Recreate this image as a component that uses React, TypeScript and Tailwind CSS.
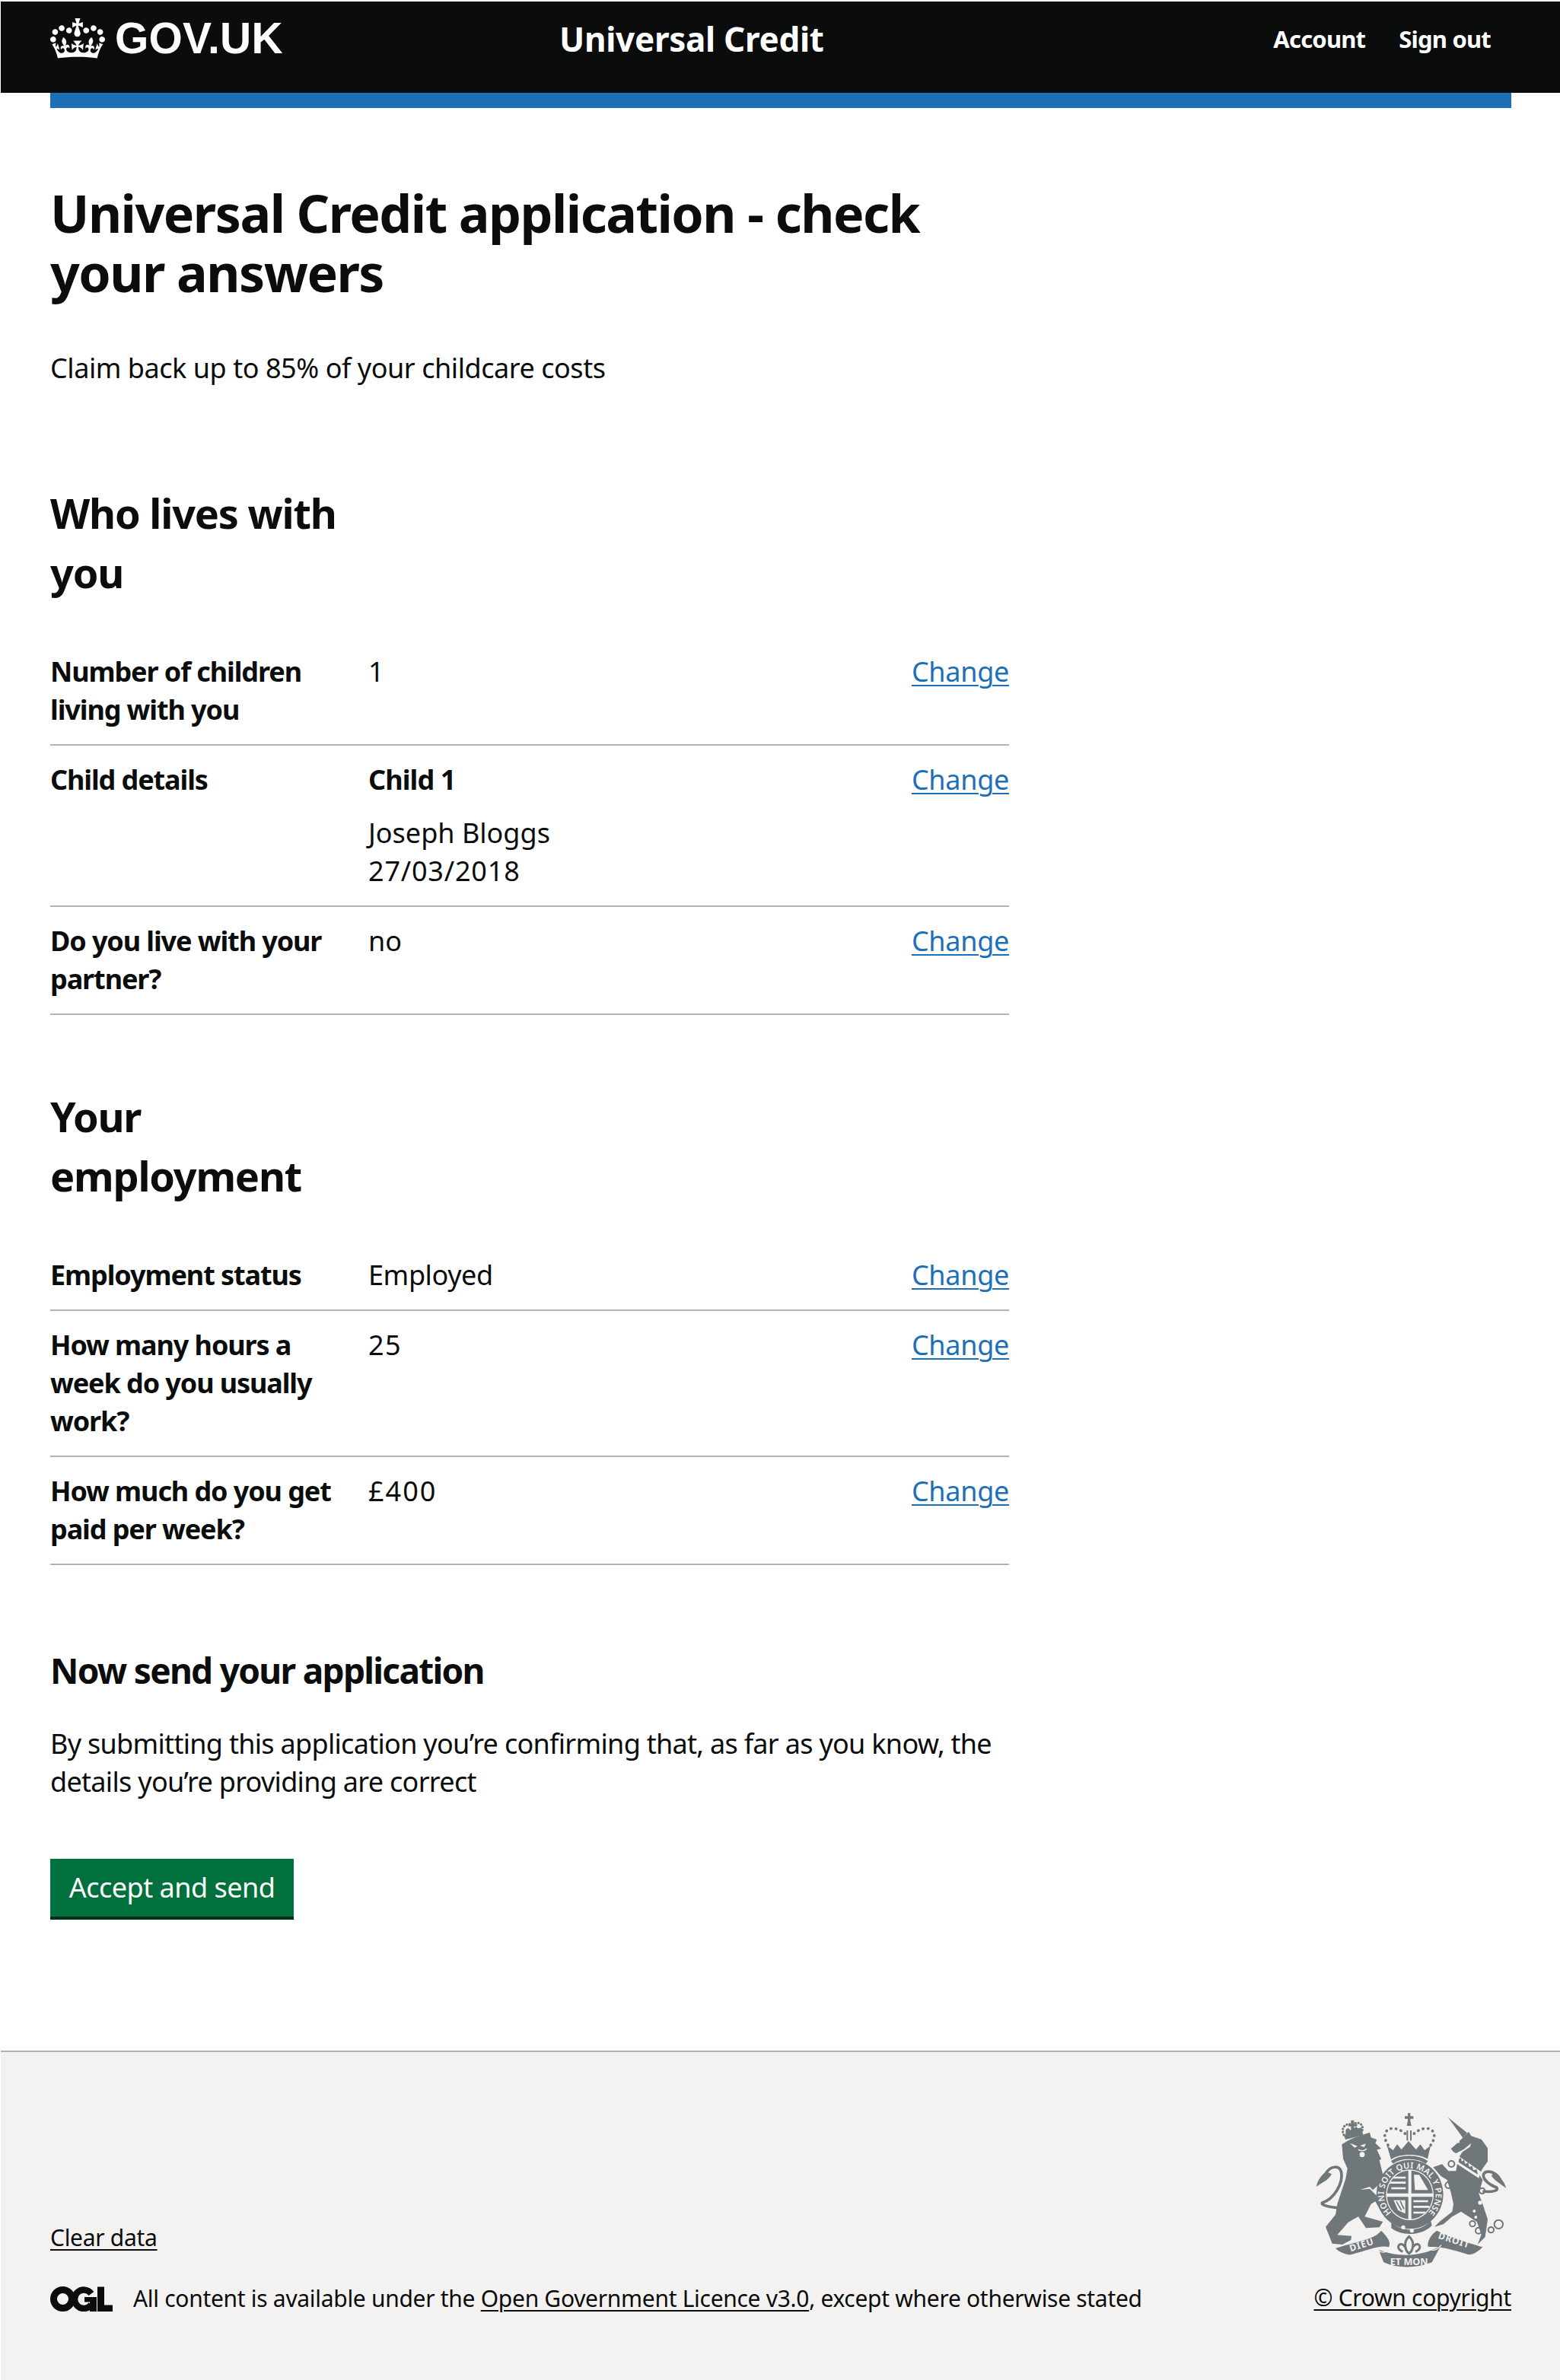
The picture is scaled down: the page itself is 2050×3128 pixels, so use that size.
import React from "react";

const INK = "#0b0c0c";

function Crown() {
  return (
    <svg viewBox="0 0 132 97" className="w-[72px] h-[53px] shrink-0 fill-white" aria-hidden="true">
      <path d="M25 30.2c3.5 1.5 7.7-.2 9.1-3.7 1.5-3.6-.2-7.8-3.9-9.2-3.6-1.4-7.6.3-9.1 3.9-1.4 3.5.3 7.5 3.9 9zM9 39.5c3.6 1.5 7.8-.2 9.2-3.7 1.5-3.6-.2-7.8-3.9-9.1-3.6-1.5-7.6.2-9.1 3.8-1.4 3.5.3 7.5 3.8 9zM4.4 57.2c3.5 1.5 7.7-.2 9.1-3.8 1.5-3.6-.2-7.7-3.9-9.1-3.5-1.5-7.6.3-9.1 3.8-1.4 3.5.3 7.6 3.9 9.1zm38.3-21.4c3.5 1.5 7.7-.2 9.1-3.8 1.5-3.6-.2-7.7-3.9-9.1-3.6-1.5-7.6.3-9.1 3.8-1.3 3.6.4 7.7 3.9 9.1zm64.4-5.6c-3.6 1.5-7.8-.2-9.1-3.7-1.5-3.6.2-7.8 3.8-9.2 3.6-1.4 7.7.3 9.2 3.9 1.3 3.5-.4 7.5-3.9 9zm15.9 9.3c-3.6 1.5-7.7-.2-9.1-3.7-1.5-3.6.2-7.8 3.7-9.1 3.6-1.5 7.7.2 9.2 3.8 1.5 3.5-.3 7.5-3.8 9zm4.7 17.7c-3.6 1.5-7.8-.2-9.2-3.8-1.5-3.6.2-7.7 3.9-9.1 3.6-1.5 7.7.3 9.2 3.8 1.3 3.5-.4 7.6-3.9 9.1zM89.3 35.8c-3.6 1.5-7.8-.2-9.2-3.8-1.4-3.6.2-7.7 3.9-9.1 3.6-1.5 7.7.3 9.2 3.8 1.4 3.6-.3 7.7-3.9 9.1zM69.7 17.7l8.9 4.7V9.3l-8.9 2.8c-.2-.3-.5-.6-.9-.9L72.4 0H59.6l3.5 11.2c-.3.3-.6.5-.9.9l-8.8-2.8v13.1l8.8-4.7c.3.3.6.7.9.9l-5 15.4v.1c-.2.8-.4 1.6-.4 2.4 0 4.1 3.1 7.5 7 8.1h1.2c4-.6 7-4 7-8.1 0-.8-.1-1.7-.4-2.4V34l-5.1-15.4c.4-.2.7-.6 1-.9zM66 92.8c16.9 0 32.8 1.1 47.1 3.2 4-16.9 8.9-26.7 14-33.5l-9.6-3.4c1 4.9 1.1 7.2 0 10.2-1.5-1.4-3-4.3-4.2-8.7L108.6 76c2.8-2 5-3.2 7.5-3.3-4.4 9.4-10 11.9-13.6 11.2-4.3-.8-6.3-4.6-5.6-7.9 1-4.7 5.7-5.9 8-.5 4.3-8.7-3-11.4-7.6-8.8 7.1-7.2 7.9-13.5 2.1-21.1-8 6.1-8.1 12.3-4.5 20.8-4.7-5.4-12.1-2.5-9.5 6.2 3.4-5.2 7.9-2 7.2 3.1-.6 4.3-6.4 7.8-13.5 7.2-10.3-.9-10.9-8-11.2-13.8 2.5-.5 7.1 1.8 11 7.3L80.2 60c-4.1 4.4-8 5.3-12.3 5.4 1.4-4.4 8-11.6 8-11.6H55.5s6.4 7.2 7.9 11.6c-4.2-.1-8-1-12.3-5.4l1.4 16.4c3.9-5.5 8.5-7.7 10.9-7.3-.3 5.8-.9 12.8-11.1 13.8-7.2.6-12.9-2.9-13.5-7.2-.7-5 3.8-8.3 7.1-3.1 2.7-8.7-4.6-11.6-9.4-6.2 3.7-8.5 3.6-14.7-4.6-20.8-5.8 7.6-5 13.9 2.2 21.1-4.7-2.6-11.9.1-7.7 8.8 2.3-5.5 7.1-4.2 8.1.5.7 3.3-1.3 7.1-5.7 7.9-3.5.7-9-1.8-13.5-11.2 2.5.1 4.7 1.3 7.5 3.3l-4.7-15.4c-1.2 4.4-2.7 7.2-4.3 8.7-1.1-3-.9-5.3 0-10.2l-9.5 3.4c5 6.9 9.9 16.7 14 33.5 14.8-2.1 30.8-3.2 47.7-3.2z" />
    </svg>
  );
}

function Ogl() {
  return (
    <svg viewBox="0 0 82 33" className="w-[82px] h-[33px] shrink-0" aria-hidden="true">
      <circle cx="16.5" cy="16.5" r="12" fill="none" stroke={INK} strokeWidth="9" />
      <path d="M54 9.5 A12.2 12.2 0 1 0 54 24" fill="none" stroke={INK} strokeWidth="8.5" />
      <path d="M62 0.5 H71 V24.5 H82 V33 H62 Z" fill={INK} />
      <path d="M45 14 H61 V33 H52 V20.5 H45 Z" fill={INK} />
    </svg>
  );
}

function Crest() {
  const c = "#6f777b";
  const bg = "#f3f2f1";
  const font = "'Noto Sans', sans-serif";
  return (
    <svg viewBox="0 0 858 720" className="w-[286px] h-[240px]" aria-hidden="true">
      {/* lion */}
      <path fill={c} d="M190 205 L215 190 L240 178 L300 158 L305 178 L328 186 L322 200 L345 222 L328 226 L345 262 L338 268 L352 325 L340 360 L312 385 L300 372 L262 384 L300 380 L330 410 L345 420 L360 440 L345 470 L322 430 L305 440 L280 490 L352 510 L338 532 L285 535 L255 490 L215 512 L172 562 L228 566 L226 582 L192 600 L152 596 L126 530 L165 482 L172 440 L205 340 L212 300 L195 262 Z" />
      <path fill="none" stroke={c} strokeWidth="11" d="M172 455 C120 450 110 440 112 436 C160 420 195 360 188 315 C180 285 145 290 128 318" />
      <path fill={c} d="M128 312 C110 325 92 350 90 372 C110 355 135 350 150 322 Z" />
      <path fill={bg} d="M222 200 L252 212 L240 218 Z M262 210 L285 202 L278 216 Z" />
      <circle cx="270" cy="245" r="10" fill={bg} />
      <path fill="none" stroke={bg} strokeWidth="4" d="M255 225 C262 232 280 232 288 222" />
      {/* lion crown */}
      <path fill="none" stroke={c} strokeWidth="9" strokeLinecap="round" strokeDasharray="1 11" d="M198 168 C182 135 212 118 232 128 C255 108 282 130 268 155" />
      <path fill={c} d="M198 168 L270 150 L274 168 L204 186 Z M226 110 H238 V124 H250 V134 H238 V155 H226 V134 H216 V124 H226 Z" />
      <path fill={c} d="M205 148 L215 140 L225 150 L245 136 L255 142 L268 138 L270 152 L205 170 Z" />
      {/* royal crown */}
      <path fill={c} d="M450 82 H460 V94 H472 V104 H460 V112 L464 132 H446 L450 112 V104 H438 V94 H450 Z" />
      <path fill="none" stroke={c} strokeWidth="11" strokeLinecap="round" strokeDasharray="1 19" d="M372 208 C345 165 365 140 395 142 C420 145 440 160 445 170" />
      <path fill="none" stroke={c} strokeWidth="11" strokeLinecap="round" strokeDasharray="1 19" d="M540 208 C570 165 548 140 518 142 C495 145 475 160 468 170" />
      <rect x="445" y="150" width="6" height="40" fill={c} />
      <rect x="459" y="150" width="6" height="40" fill={c} />
      <path fill={c} d="M368 210 L392 228 L408 205 L425 225 L453 192 L482 225 L500 205 L516 228 L540 210 L528 262 C490 240 415 240 384 265 Z" />
      <path fill="none" stroke={c} strokeWidth="14" d="M388 276 C420 250 490 250 525 276" />
      {/* unicorn */}
      <path fill={c} d="M608 98 L684 160 L668 180 Z" />
      <path fill={c} d="M620 222 L640 205 L660 185 L690 155 L700 172 L740 185 L765 220 L765 272 L745 300 L732 325 L745 345 L730 400 L745 440 L765 500 L755 570 L725 600 L740 560 L722 510 L690 490 L660 470 L625 490 L590 520 L555 530 L575 510 L625 470 L630 440 L620 395 L605 345 L580 330 L550 295 L585 283 L610 310 L640 310 L648 262 L665 235 L695 215 L700 200 L670 225 L640 240 L630 235 Z" />
      <path fill="none" stroke={c} strokeWidth="11" d="M745 390 C790 395 810 385 800 375 C760 360 735 330 755 315 C780 305 805 325 815 345" />
      <path fill={c} d="M788 312 C805 330 830 345 838 378 C815 360 795 350 780 330 Z" />
      <path fill={bg} d="M648 250 L738 312 L730 338 L640 280 Z" />
      <path fill={c} d="M652 262 L660 258 L662 272 L672 266 L676 282 L688 276 L692 294 L704 290 L708 306 L722 304 L726 324 L650 275 Z" />
      <circle cx="650" cy="196" r="4" fill={bg} />
      <g fill="none" stroke={c} strokeWidth="6">
        <circle cx="622" cy="282" r="12" /><circle cx="610" cy="366" r="12" /><circle cx="743" cy="388" r="11" />
        <circle cx="705" cy="518" r="11" /><circle cx="729" cy="545" r="12" /><circle cx="778" cy="542" r="11" /><circle cx="808" cy="520" r="17" />
      </g>
      <g fill={bg}><circle cx="735" cy="435" r="8" /><circle cx="712" cy="468" r="6" /><circle cx="718" cy="492" r="6" /></g>
      {/* garter and shield */}
      <ellipse cx="458" cy="402" rx="132" ry="136" fill={c} />
      <ellipse cx="458" cy="404" rx="94" ry="100" fill={bg} />
      <defs>
        <clipPath id="shield"><ellipse cx="458" cy="404" rx="90" ry="96" /></clipPath>
        <path id="garter" d="M386 474 A102 102 0 1 1 530 474" />
      </defs>
      <g clipPath="url(#shield)">
        <path fill={c} d="M360 300 H452 V398 H360 Z M464 300 H560 V398 H464 Z M464 412 H560 V510 H464 Z M360 412 H452 V510 H360 Z" />
        <path fill={bg} d="M385 332 H442 V340 H385 Z M375 352 H442 V360 H375 Z M385 374 H442 V382 H385 Z M474 325 L495 325 L530 385 L478 385 Z M472 425 H530 V433 H472 Z M472 447 H535 V455 H472 Z M472 470 H520 V478 H472 Z M394 425 L440 425 L440 478 L412 465 Z" />
        <path fill="none" stroke={c} strokeWidth="5" d="M405 430 L425 465 M420 428 L435 460" />
      </g>
      <text fontFamily={font} fontWeight="600" fontSize="33" fill={bg}>
        <textPath href="#garter" textLength="480" lengthAdjust="spacing">HONI SOIT QUI MAL Y PENSE</textPath>
      </text>
      {/* buckle */}
      <path fill={c} d="M385 510 C420 550 500 555 540 505 L545 525 C500 570 420 565 385 535 Z" />
      <circle cx="432" cy="532" r="8" fill={bg} /><circle cx="466" cy="545" r="8" fill={bg} />
      {/* fleur de lys */}
      <path fill="none" stroke={c} strokeWidth="9" d="M455 568 C430 590 440 625 455 635 C470 625 480 590 455 568 Z M440 610 C420 580 395 615 430 628 M470 610 C490 580 515 615 480 628" />
      {/* ribbon */}
      <path fill={c} d="M165 615 C240 590 320 580 345 545 C370 570 385 590 375 610 C340 600 285 625 225 640 C205 640 180 630 165 615 Z" />
      <path fill={c} d="M745 610 C680 590 600 565 565 545 C540 560 525 590 530 610 C580 605 640 625 690 640 C710 640 730 625 745 610 Z" />
      <path fill={c} d="M335 620 C410 650 500 650 580 605 L545 670 C480 695 410 695 355 670 Z" />
      <path fill="none" stroke={bg} strokeWidth="4" d="M330 618 C350 640 370 630 378 610 M582 602 C560 630 540 625 530 608" />
      <text fontFamily={font} fontWeight="700" fontSize="36" fill={bg} transform="translate(225 628) rotate(-18)" letterSpacing="3">DIEU</text>
      <text fontFamily={font} fontWeight="700" fontSize="36" fill={bg} transform="translate(568 575) rotate(18)" letterSpacing="3">DROIT</text>
      <text x="455" y="682" textAnchor="middle" fontFamily={font} fontWeight="700" fontSize="38" fill={bg}>ET MON</text>
    </svg>
  );
}

function Row({ k, children }: { k: React.ReactNode; children: React.ReactNode }) {
  return (
    <div className="grid grid-cols-[420px_1fr_auto] border-b-2 border-[#b1b4b6] pt-5 pb-5">
      <div className="font-bold tracking-[-1.1px] pr-8">{k}</div>
      <div className="ml-[-2px]">{children}</div>
      <div>
        <a href="#" className="text-[#1d70b8] underline underline-offset-[4px] decoration-2 tracking-[-0.3px]">Change</a>
      </div>
    </div>
  );
}

export default function App() {
  return (
    <div className="font-['Noto_Sans',sans-serif] text-[#0b0c0c] text-[36px] leading-[50px] bg-white min-h-[3128px] flex flex-col">
      <header className="mt-[2px] ml-px h-[120px] bg-[#0b0c0c] text-white flex items-start pl-[65px] pr-[91px] pt-[21px]">
        <div className="w-[669px] shrink-0 flex items-center gap-[13px]">
          <Crown />
          <span className="font-['Liberation_Sans',sans-serif] font-bold text-[57px] leading-[54px] tracking-[0.2px]">GOV.UK</span>
        </div>
        <div className="font-bold text-[44px] leading-[56px] tracking-[-0.3px]">Universal Credit</div>
        <nav className="ml-auto flex gap-[44px] font-bold text-[31px] leading-[50px] mt-[3px] tracking-[-0.8px]">
          <a href="#">Account</a>
          <a href="#">Sign out</a>
        </nav>
      </header>
      <div className="ml-[66px] mr-[64px] h-5 bg-[#1d70b8]" />
      <main className="pl-[66px] w-[1326px] flex-1">
        <h1 className="mt-[99px] font-bold text-[68px] leading-[78px] tracking-[-1.5px] w-[1260px]">Universal Credit application - check your answers</h1>
        <p className="mt-[62px] tracking-[-0.45px]">Claim back up to 85% of your childcare costs</p>
        <h2 className="mt-[126px] font-bold text-[54px] leading-[78px] tracking-[-1.2px] w-[420px]">Who lives with you</h2>
        <div className="mt-[47px]">
          <Row k="Number of children living with you">1</Row>
          <Row k="Child details">
            <div className="font-bold tracking-[-0.9px] mb-5">Child 1</div>
            <div>Joseph Bloggs</div>
            <div className="tracking-[0.8px]">27/03/2018</div>
          </Row>
          <Row k="Do you live with your partner?">no</Row>
        </div>
        <h2 className="mt-[94px] font-bold text-[54px] leading-[78px] tracking-[-1.2px] w-[420px]">Your employment</h2>
        <div className="mt-[47px]">
          <Row k="Employment status"><span className="tracking-[-0.4px]">Employed</span></Row>
          <Row k="How many hours a week do you usually work?"><span className="tracking-[1.5px]">25</span></Row>
          <Row k="How much do you get paid per week?"><span className="tracking-[2px]">£400</span></Row>
        </div>
        <h3 className="mt-[108px] font-bold text-[46px] leading-[60px] tracking-[-1.7px]">Now send your application</h3>
        <p className="mt-[42px] tracking-[-0.7px] w-[1260px]">By submitting this application you’re confirming that, as far as you know, the details you’re providing are correct</p>
        <a href="#" className="mt-[76px] flex items-center justify-center w-[320px] h-[80px] bg-[#00703c] text-white border-b-4 border-[#002d18] tracking-[-0.5px]">Accept and send</a>
      </main>
      <footer className="ml-px h-[433px] bg-[#f3f2f1] border-t-2 border-[#b1b4b6] flex items-start justify-between pl-[65px] pr-[64px] text-[30px] leading-[40px]">
        <div className="mt-[224px]">
          <a href="#" className="underline underline-offset-[4px] decoration-2 tracking-[-0.3px]">Clear data</a>
          <div className="mt-[40px] flex items-center gap-[27px]">
            <Ogl />
            <span className="tracking-[-0.3px]">All content is available under the <a href="#" className="underline underline-offset-[4px] decoration-2">Open Government Licence v3.0</a>, except where otherwise stated</span>
          </div>
        </div>
        <div className="mt-[53px] flex flex-col items-end">
          <Crest />
          <a href="#" className="mt-[10px] underline underline-offset-[4px] decoration-2 tracking-[-0.3px]">© Crown copyright</a>
        </div>
      </footer>
    </div>
  );
}
